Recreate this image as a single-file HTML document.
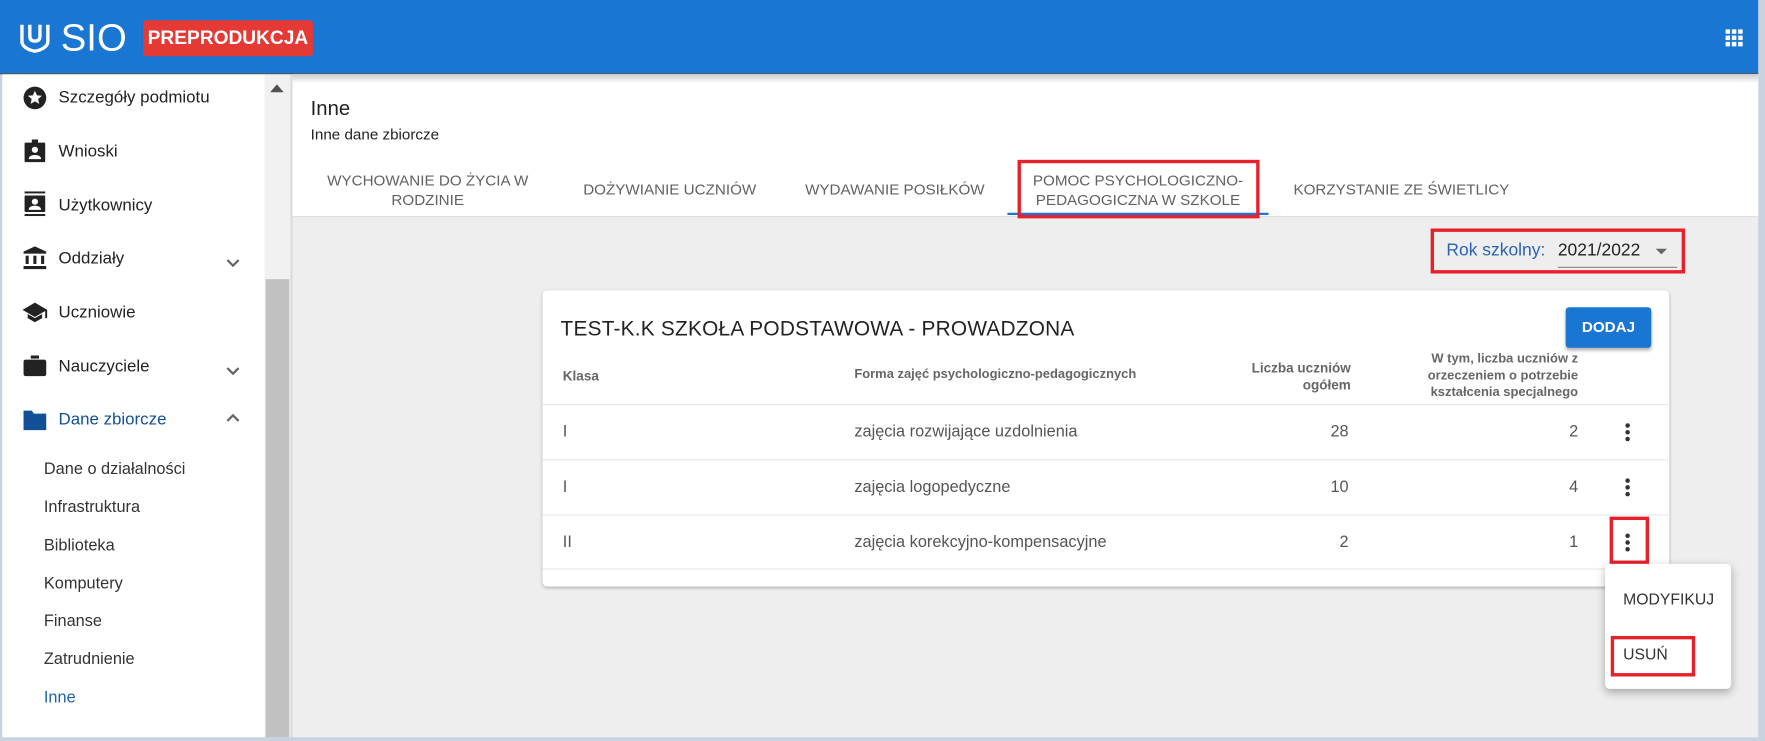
<!DOCTYPE html>
<html><head><meta charset="utf-8"><style>
*{box-sizing:border-box;margin:0;padding:0}
html,body{width:1765px;height:741px;overflow:hidden}
body{background:#c9d3e0;font-family:"Liberation Sans",sans-serif;color:#212121}
#w{position:absolute;left:0;top:0;width:1568px;height:658px;transform:scale(1.1256);transform-origin:0 0;background:#c9d3e0;overflow:hidden}
.a{position:absolute}
#hdr{left:0;top:0;width:1562px;height:66px;background:#1976d2;border-bottom:1px solid #555}
#side{left:2px;top:66px;width:233px;height:589px;background:#fff}
.mi{position:absolute;left:50px;font-size:15px;color:#222}
.ic{position:absolute;left:18px;width:22px;height:22px}
.sub{position:absolute;left:37px;font-size:14.5px;color:#333}
.chev{position:absolute;left:198px;width:14px;height:14px}
#main{left:260px;top:66px;width:1302px;height:589px;background:#eeeeee}
.tab{position:absolute;top:152px;font-size:13.5px;color:#616161;text-align:center;line-height:17px}
.red{position:absolute;border:3px solid #e8202a}
.row{position:absolute;left:482px;width:1000px;height:49px;border-top:1px solid #e6e6e6;font-size:14.5px;color:#555}
.row span{position:absolute;top:16px}
.dots{position:absolute;left:962px;top:16px;width:4px}
.dots i{display:block;width:4px;height:4px;border-radius:50%;background:#333;margin-bottom:2px}
</style></head><body><div id="w">
<div class="a" id="hdr">
 <svg class="a" style="left:16px;top:19px" width="30" height="30" viewBox="0 0 30 30"><path d="M2 3v15c0 5 6 9 13 10c7-1 13-5 13-10V3h-3v15c0 3-4 6-10 7c-6-1-10-4-10-7V3z M9 3h3v10c0 2 1 3 3 3s3-1 3-3V3h3v10c0 4-2 6-6 6s-6-2-6-6z" fill="#fff"/></svg>
 <div class="a" style="left:54px;top:15px;color:#fff;font-size:34px;letter-spacing:0px">SIO</div>
 <div class="a" style="left:127px;top:18px;width:151px;height:32px;background:#e53935;border-radius:3px;color:#fff;font-size:17px;font-weight:bold;line-height:32px;text-align:center">PREPRODUKCJA</div>
 <svg class="a" style="left:1533px;top:26px" width="16" height="16" viewBox="0 0 20 20" fill="#fff"><rect x="0" y="0" width="5" height="5"/><rect x="7" y="0" width="5" height="5"/><rect x="14" y="0" width="5" height="5"/><rect x="0" y="7" width="5" height="5"/><rect x="7" y="7" width="5" height="5"/><rect x="14" y="7" width="5" height="5"/><rect x="0" y="14" width="5" height="5"/><rect x="7" y="14" width="5" height="5"/><rect x="14" y="14" width="5" height="5"/></svg>
</div>
<div class="a" id="side">
 <svg class="ic" style="top:10px" viewBox="0 0 24 24"><circle cx="12" cy="12" r="11" fill="#222"/><path d="M12 5l2 4.5 4.8.4-3.7 3.2 1.1 4.7L12 15.3 7.8 17.8l1.1-4.7L5.2 9.9 10 9.5z" fill="#fff"/></svg>
 <div class="mi" style="top:12px">Szczegóły podmiotu</div>
 <svg class="ic" style="top:57px" viewBox="0 0 24 24"><rect x="2" y="4" width="20" height="19" rx="1" fill="#222"/><rect x="9" y="1" width="6" height="5" fill="#222"/><circle cx="12" cy="11" r="3" fill="#fff"/><path d="M6 20c0-3 3-4 6-4s6 1 6 4z" fill="#fff"/></svg>
 <div class="mi" style="top:60px">Wnioski</div>
 <svg class="ic" style="top:104px" viewBox="0 0 24 24"><rect x="2" y="0" width="20" height="2" fill="#222"/><rect x="2" y="4" width="20" height="16" rx="1" fill="#222"/><rect x="2" y="22" width="20" height="2" fill="#222"/><circle cx="12" cy="10" r="3" fill="#fff"/><path d="M6 18c0-3 3-4 6-4s6 1 6 4z" fill="#fff"/></svg>
 <div class="mi" style="top:108px">Użytkownicy</div>
 <svg class="ic" style="top:152px" viewBox="0 0 24 24" fill="#222"><path d="M12 1L1 6v2h22V6z"/><rect x="3" y="10" width="3" height="8"/><rect x="10.5" y="10" width="3" height="8"/><rect x="18" y="10" width="3" height="8"/><rect x="1" y="20" width="22" height="3"/></svg>
 <div class="mi" style="top:155px">Oddziały</div>
 <svg class="chev" style="top:161px" viewBox="0 0 14 14"><path d="M2 4l5 5 5-5" stroke="#666" stroke-width="2" fill="none"/></svg>
 <svg class="ic" style="top:201px" viewBox="0 0 24 24" fill="#222"><path d="M12 2L0 9l12 7 10-5.8V17h2V9z"/><path d="M5 13v4l7 4 7-4v-4l-7 4z"/></svg>
 <div class="mi" style="top:203px">Uczniowie</div>
 <svg class="ic" style="top:248px" viewBox="0 0 24 24" fill="#222"><rect x="1" y="6" width="22" height="16" rx="2"/><rect x="8" y="2" width="8" height="3"/></svg>
 <div class="mi" style="top:251px">Nauczyciele</div>
 <svg class="chev" style="top:257px" viewBox="0 0 14 14"><path d="M2 4l5 5 5-5" stroke="#666" stroke-width="2" fill="none"/></svg>
 <svg class="ic" style="top:296px" viewBox="0 0 24 24" fill="#114f96"><path d="M1 3h8l2 3h12v16H1z"/></svg>
 <div class="mi" style="top:298px;color:#114f96">Dane zbiorcze</div>
 <svg class="chev" style="top:298px" viewBox="0 0 14 14"><path d="M2 10l5-5 5 5" stroke="#666" stroke-width="2" fill="none"/></svg>
 <div class="sub" style="top:343px">Dane o działalności</div>
 <div class="sub" style="top:377px">Infrastruktura</div>
 <div class="sub" style="top:411px">Biblioteka</div>
 <div class="sub" style="top:445px">Komputery</div>
 <div class="sub" style="top:478px">Finanse</div>
 <div class="sub" style="top:512px">Zatrudnienie</div>
 <div class="sub" style="top:546px;color:#1e63a8">Inne</div>
</div>
<div class="a" style="left:235px;top:66px;width:23px;height:589px;background:#f1f1f1"></div>
<div class="a" style="left:236px;top:248px;width:21px;height:407px;background:#c1c1c1"></div>
<div class="a" style="left:240px;top:75px;width:0;height:0;border-left:6px solid transparent;border-right:6px solid transparent;border-bottom:7px solid #505050"></div>
<div class="a" style="left:258px;top:66px;width:2px;height:589px;background:#ddd"></div>
<div class="a" id="main"></div>
<div class="a" style="left:260px;top:66px;width:1302px;height:127px;background:#fff;border-bottom:1px solid #ddd"></div>
<div class="a" style="left:260px;top:66px;width:1302px;height:8px;background:linear-gradient(#ccc,#fff)"></div>
<div class="a" style="left:276px;top:86px;font-size:18px;color:#222">Inne</div>
<div class="a" style="left:276px;top:112px;font-size:13.5px;color:#222">Inne dane zbiorcze</div>
<div class="tab" style="left:280px;width:200px">WYCHOWANIE DO ŻYCIA W<br>RODZINIE</div>
<div class="tab" style="left:505px;width:180px;top:160px">DOŻYWIANIE UCZNIÓW</div>
<div class="tab" style="left:705px;width:180px;top:160px">WYDAWANIE POSIŁKÓW</div>
<div class="tab" style="left:895px;width:232px">POMOC PSYCHOLOGICZNO-<br>PEDAGOGICZNA W SZKOLE</div>
<div class="tab" style="left:1135px;width:220px;top:160px">KORZYSTANIE ZE ŚWIETLICY</div>
<div class="a" style="left:895px;top:189px;width:232px;height:2px;background:#1976d2"></div>
<div class="red" style="left:904px;top:142px;width:215px;height:52px"></div>
<div class="red" style="left:1271px;top:203px;width:226px;height:40px"></div>
<div class="a" style="left:1285px;top:214px;font-size:15.5px;color:#2b62b5">Rok szkolny:</div>
<div class="a" style="left:1384px;top:214px;font-size:15.5px;color:#222">2021/2022</div>
<div class="a" style="left:1471px;top:221px;border-left:5px solid transparent;border-right:5px solid transparent;border-top:5px solid #666"></div>
<div class="a" style="left:1384px;top:237px;width:106px;height:1px;background:#888"></div>
<div class="a" style="left:482px;top:258px;width:1001px;height:263px;background:#fff;border-radius:4px;box-shadow:0 1px 3px rgba(0,0,0,.25)"></div>
<div class="a" style="left:498px;top:281px;font-size:18.5px;color:#222;letter-spacing:.2px">TEST-K.K SZKOŁA PODSTAWOWA - PROWADZONA</div>
<div class="a" style="left:1391px;top:273px;width:76px;height:36px;background:#1976d2;border-radius:3px;color:#fff;font-weight:bold;font-size:13.5px;line-height:36px;text-align:center;box-shadow:0 2px 3px rgba(0,0,0,.3)">DODAJ</div>
<div class="a" style="left:500px;top:327px;font-size:12px;font-weight:bold;color:#666">Klasa</div>
<div class="a" style="left:759px;top:327px;font-size:11.5px;font-weight:bold;color:#666">Forma zajęć psychologiczno-pedagogicznych</div>
<div class="a" style="left:1080px;top:320px;width:120px;font-size:12px;font-weight:bold;color:#666;text-align:right;line-height:15px">Liczba uczniów<br>ogółem</div>
<div class="a" style="left:1230px;top:312px;width:172px;font-size:11.5px;font-weight:bold;color:#666;text-align:right;line-height:15px">W tym, liczba uczniów z<br>orzeczeniem o potrzebie<br>kształcenia specjalnego</div>
<div class="row" style="top:359px"><span style="left:18px">I</span><span style="left:277px">zajęcia rozwijające uzdolnienia</span><span style="left:700px">28</span><span style="left:912px">2</span><div class="dots"><i></i><i></i><i></i></div></div>
<div class="row" style="top:408px"><span style="left:18px">I</span><span style="left:277px">zajęcia logopedyczne</span><span style="left:700px">10</span><span style="left:912px">4</span><div class="dots"><i></i><i></i><i></i></div></div>
<div class="row" style="top:457px;border-bottom:1px solid #e6e6e6"><span style="left:18px">II</span><span style="left:277px">zajęcia korekcyjno-kompensacyjne</span><span style="left:708px">2</span><span style="left:912px">1</span><div class="dots"><i></i><i></i><i></i></div></div>
<div class="red" style="left:1430px;top:459px;width:35px;height:42px"></div>
<div class="a" style="left:1426px;top:501px;width:112px;height:111px;background:#fff;border-radius:4px;box-shadow:0 3px 8px rgba(0,0,0,.3)"></div>
<div class="a" style="left:1442px;top:524px;font-size:14px;color:#333">MODYFIKUJ</div>
<div class="a" style="left:1442px;top:573px;font-size:14px;color:#333">USUŃ</div>
<div class="red" style="left:1431px;top:565px;width:75px;height:36px"></div>
</div></body></html>
